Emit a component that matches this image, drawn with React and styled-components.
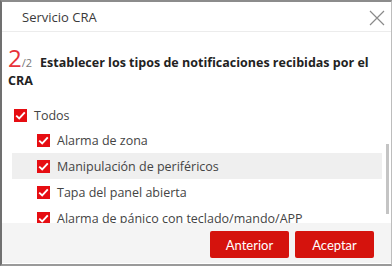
import React from "react";
import styled, { createGlobalStyle } from "styled-components";

const Global = createGlobalStyle`
  html, body { margin: 0; padding: 0; background: #fff; }
  body { width: 392px; height: 266px; overflow: hidden; font-family: "Open Sans", "Noto Sans", sans-serif; }
`;

const Dialog = styled.div`
  position: relative;
  box-sizing: border-box;
  width: 392px;
  height: 266px;
  border-top: 2px solid #8c8c8c;
  border-left: 2px solid #707070;
  border-right: 1px solid #bdbdbd;
  border-bottom: 2px solid #9a9a9a;
  background: #fff;
  display: flex;
  flex-direction: column;
  overflow: hidden;
`;

const Header = styled.div`
  height: 29px;
  flex: none;
  display: flex;
  align-items: center;
  justify-content: space-between;
  padding: 0 6px 0 20px;
  border-bottom: 1px solid #ececec;
`;

const HeaderTitle = styled.span`
  font-size: 13px;
  color: #3a3a3a;
  margin-top: 1px;
`;

const Close = styled.button`
  border: none;
  background: none;
  padding: 0;
  width: 16px;
  height: 16px;
  display: flex;
  margin-top: 2px;
`;

const Body = styled.div`
  flex: 1;
  position: relative;
  overflow: hidden;
  padding: 17px 0 0 6px;
`;

const Title = styled.div`
  font-size: 12.5px;
  font-weight: 700;
  color: #222;
  line-height: 18px;
  padding-right: 16px;
`;

const Step = styled.span`
  font-size: 24px;
  font-weight: 400;
  color: #e8323a;
  line-height: 18px;
`;

const Total = styled.span`
  font-size: 11px;
  font-weight: 400;
  color: #777;
  margin-right: 8px;
`;

const List = styled.div`
  margin-top: 13px;
  padding-left: 4px;
  padding-right: 9px;
`;

const Row = styled.div`
  display: flex;
  align-items: center;
  height: ${(p) => (p.$top ? 24 : 26)}px;
  padding-left: ${(p) => (p.$top ? 2 : 25)}px;
  background: ${(p) => (p.$hover ? "#efefef" : "transparent")};
  font-size: 12.5px;
  color: #444;
`;

const Box = styled.span`
  width: 13px;
  height: 13px;
  background: #e60d12;
  display: flex;
  align-items: center;
  justify-content: center;
  margin-right: 7px;
  flex: none;
`;

const Thumb = styled.div`
  position: absolute;
  right: 2px;
  top: 112px;
  width: 3px;
  height: 70px;
  background: #c4c4c4;
`;

const Footer = styled.div`
  flex: none;
  height: 41px;
  background: #f4f4f4;
  display: flex;
  justify-content: flex-end;
  align-items: flex-start;
  gap: 6px;
  padding: 8px 17px 0 0;
  box-sizing: border-box;
  border-bottom: 1px solid #fff;
`;

const Button = styled.button`
  width: 79px;
  height: 27px;
  border: none;
  border-radius: 2px;
  background: #d5130d;
  color: #fff;
  font-family: "Lato", sans-serif;
  font-size: 13px;
  padding: 0;
`;

const Check = () => (
  <svg width="11" height="9" viewBox="0 0 11 9">
    <path d="M1.2 4.6 L4.2 7.4 L9.8 1.4" fill="none" stroke="#fff" strokeWidth="1.9" />
  </svg>
);

const items = [
  "Alarma de zona",
  "Manipulación de periféricos",
  "Tapa del panel abierta",
  "Alarma de pánico con teclado/mando/APP",
];

export default function App() {
  return (
    <>
      <Global />
      <Dialog>
        <Header>
          <HeaderTitle>Servicio CRA</HeaderTitle>
          <Close aria-label="close">
            <svg width="16" height="16" viewBox="0 0 16 16">
              <path d="M1 1 L15 15 M15 1 L1 15" stroke="#8a8a8a" strokeWidth="1.2" />
            </svg>
          </Close>
        </Header>
        <Body>
          <Title>
            <Step>2</Step>
            <Total>/2</Total>
            Establecer los tipos de notificaciones recibidas por el CRA
          </Title>
          <List>
            <Row $top>
              <Box><Check /></Box>
              Todos
            </Row>
            {items.map((t, i) => (
              <Row key={t} $hover={i === 1}>
                <Box><Check /></Box>
                {t}
              </Row>
            ))}
          </List>
          <Thumb />
        </Body>
        <Footer>
          <Button>Anterior</Button>
          <Button>Aceptar</Button>
        </Footer>
      </Dialog>
    </>
  );
}
